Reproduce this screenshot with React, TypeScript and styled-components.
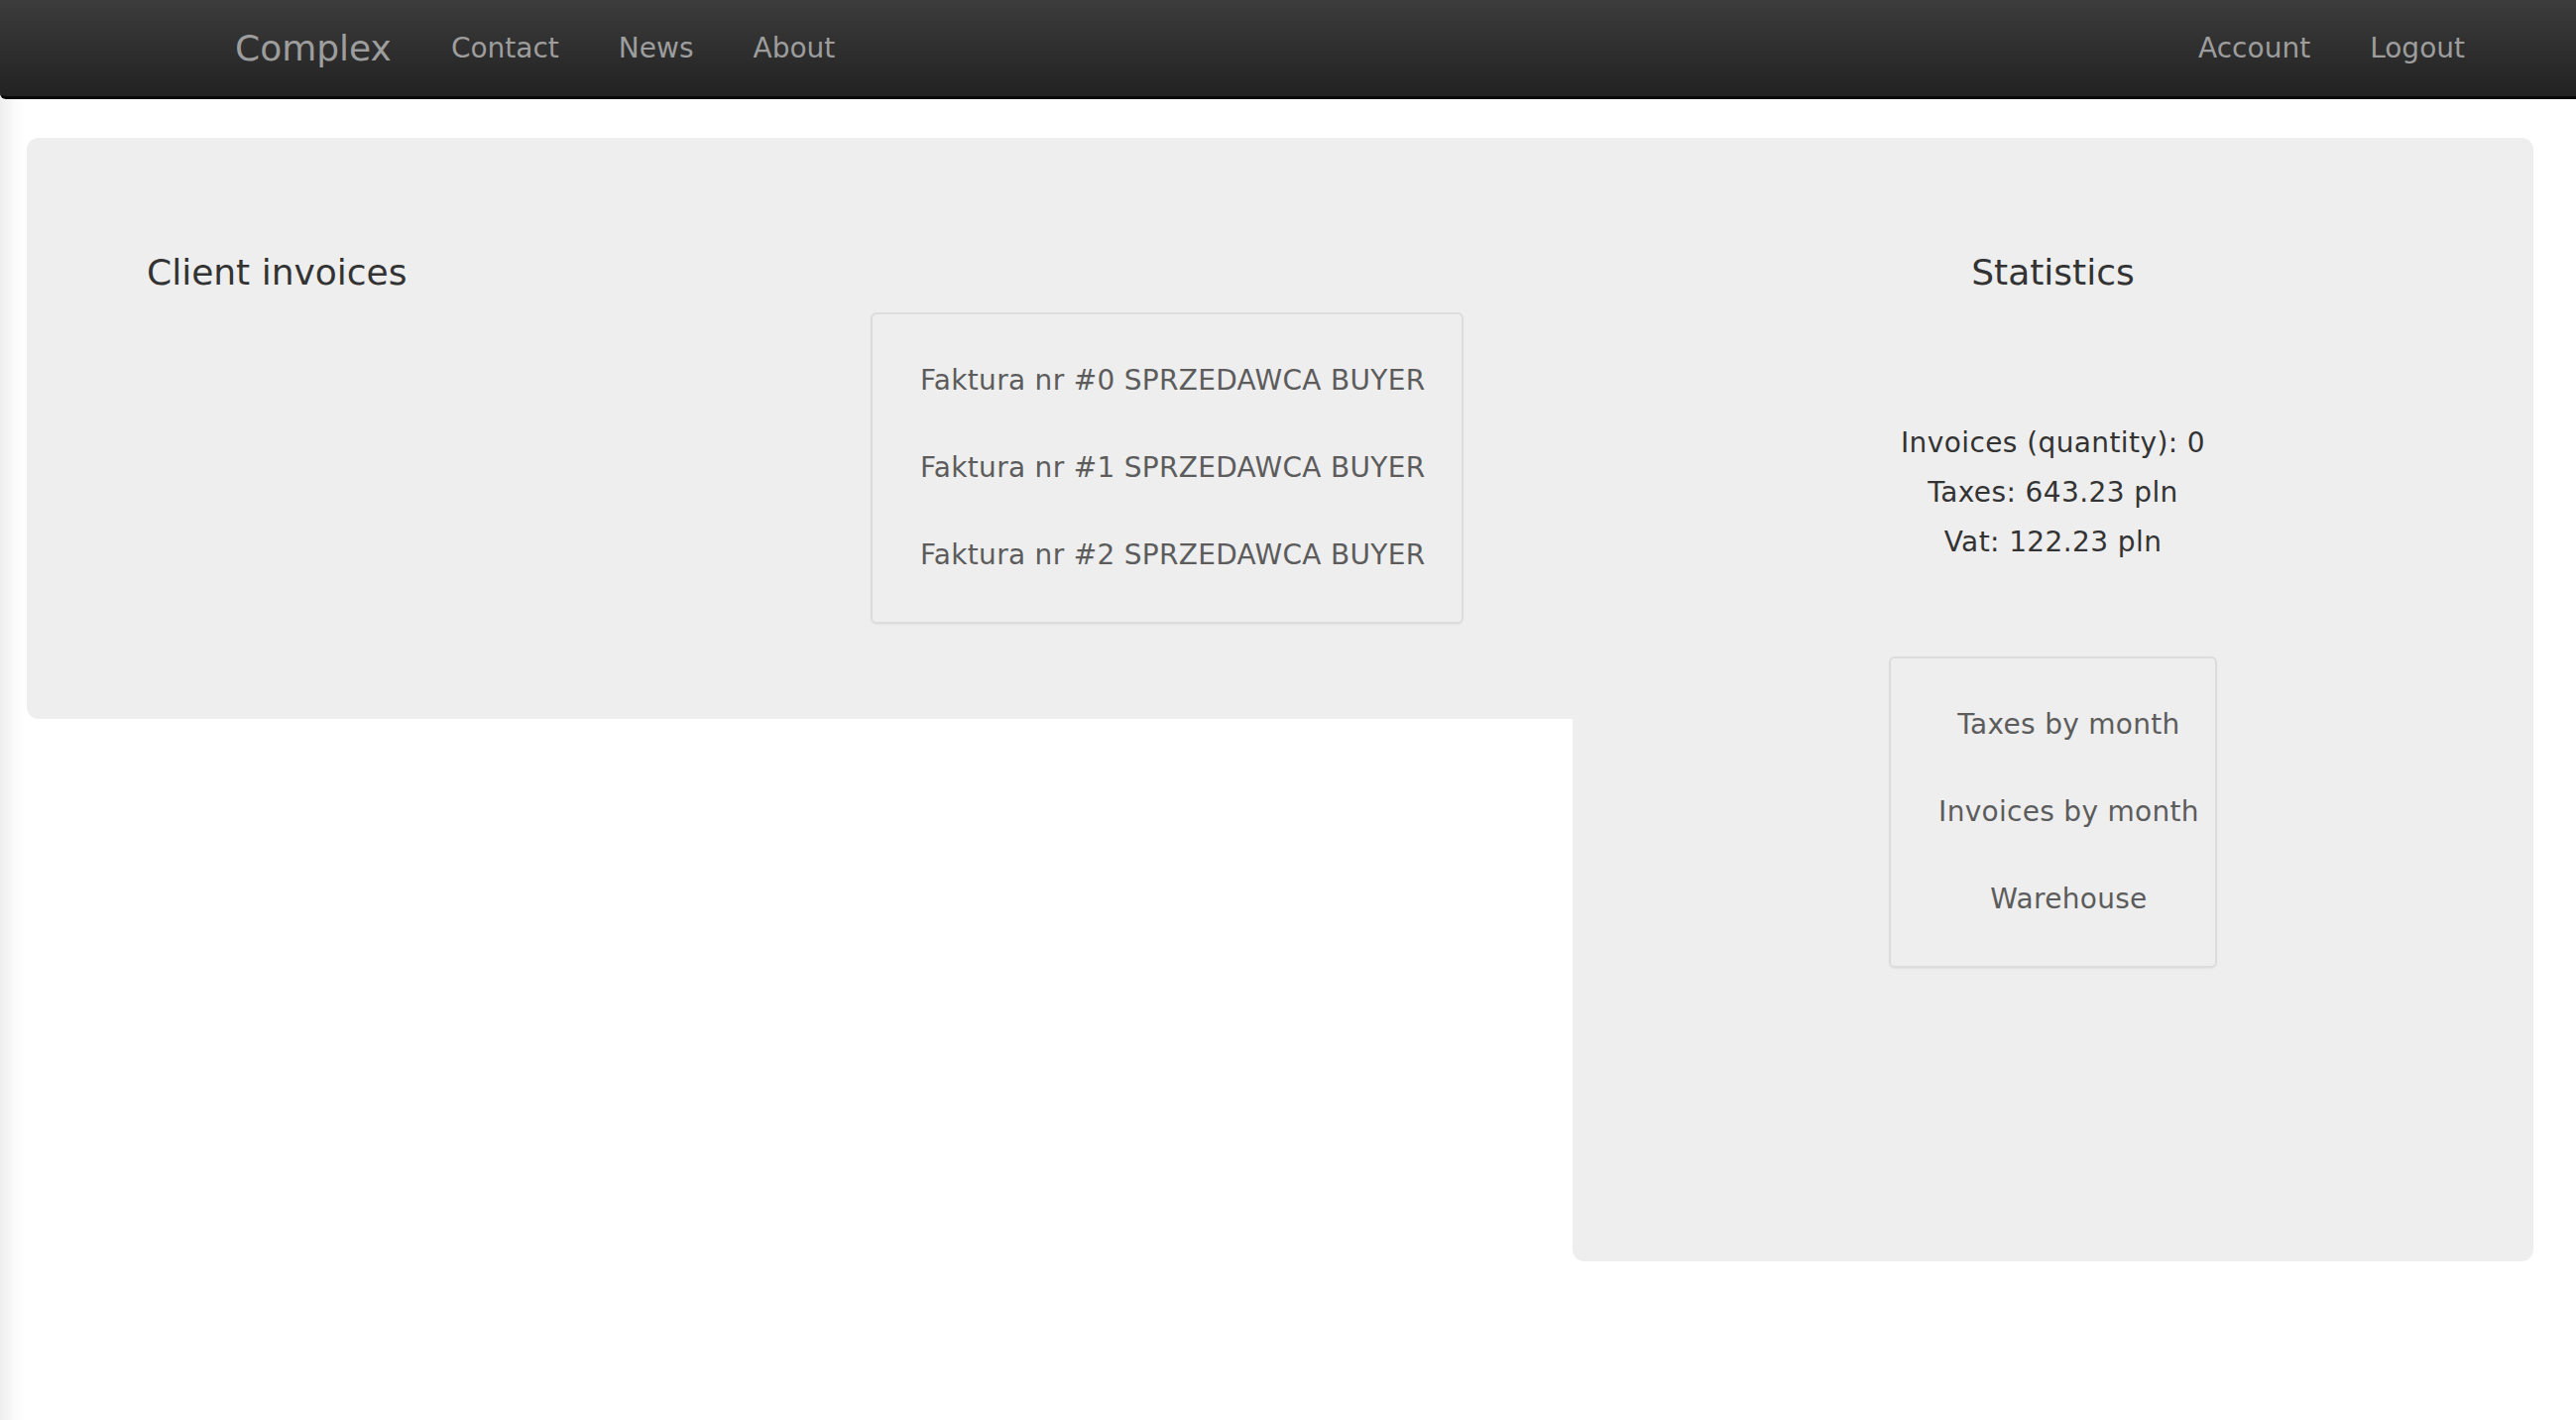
import styled, { createGlobalStyle } from 'styled-components';

const GlobalStyle = createGlobalStyle`
    html, body {
        margin: 0;
        padding: 0;
    }
    body {
        min-height: 100vh;
        background: linear-gradient(to right, #eeeeee 0, #fafafa 14px, #ffffff 26px);
        font-family: "DejaVu Sans", Verdana, sans-serif;
        color: #333;
    }
`;

const Navbar = styled.nav`
    height: 97px;
    background: linear-gradient(to bottom, #3c3c3c 0, #222 100%);
    border-bottom: 3px solid #080808;
    border-bottom-left-radius: 6px;
`;

const NavInner = styled.div`
    display: flex;
    align-items: center;
    height: 100%;
    padding: 0 82px 0 207px;
`;

const Brand = styled.a`
    font-size: 36px;
    color: #9d9d9d;
    padding: 0 30px;
    text-decoration: none;
`;

const NavList = styled.ul<{ $right?: boolean }>`
    display: flex;
    list-style: none;
    margin: 0 0 0 ${(p) => (p.$right ? 'auto' : '0')};
    padding: 0;
`;

const NavLink = styled.a`
    display: block;
    font-size: 28px;
    color: #9d9d9d;
    padding: 0 30px;
    text-decoration: none;
`;

const Main = styled.main`
    display: flex;
    align-items: flex-start;
    padding: 39px 43px 0 27px;
`;

const InvoicesPanel = styled.section`
    flex: 1;
    height: 586px;
    box-sizing: border-box;
    padding: 116px 0 0 121px;
    background: #eee;
    border-radius: 12px 0 0 12px;
`;

const StatsPanel = styled.section`
    width: 969px;
    height: 1133px;
    box-sizing: border-box;
    padding-top: 116px;
    display: flex;
    flex-direction: column;
    align-items: center;
    background: #eee;
    border-radius: 0 12px 12px 12px;
`;

const Heading = styled.h3`
    margin: 0;
    font-size: 36px;
    line-height: 40px;
    font-weight: normal;
    color: #333;
`;

const Well = styled.ul<{ $center?: boolean; $padRight: number }>`
    list-style: none;
    width: fit-content;
    margin: 20px 0 0 730px;
    padding: 23px ${(p) => p.$padRight}px 23px 48px;
    border: 2px solid #dcdcdc;
    border-radius: 6px;
    box-shadow: 0 1px 2px rgba(0, 0, 0, 0.06);
    text-align: ${(p) => (p.$center ? 'center' : 'left')};
`;

const StatsWell = styled(Well)`
    margin: 90px 0 0;
`;

const WellItem = styled.li`
    height: 88px;
    line-height: 88px;
    font-size: 28px;
    letter-spacing: 0.3px;
    color: #5c5c5c;
    white-space: nowrap;
`;

const StatsList = styled.div`
    margin-top: 127px;
    text-align: center;
`;

const StatLine = styled.p`
    margin: 0;
    font-size: 28px;
    line-height: 50px;
    letter-spacing: 0.4px;
    color: #333;
`;

const invoices = [0, 1, 2].map((n) => `Faktura nr #${n} SPRZEDAWCA BUYER`);
const reports = ['Taxes by month', 'Invoices by month', 'Warehouse'];

export default function App() {
    return (
        <>
            <GlobalStyle />
            <Navbar>
                <NavInner>
                    <Brand href="#">Complex</Brand>
                    <NavList>
                        <li><NavLink href="#">Contact</NavLink></li>
                        <li><NavLink href="#">News</NavLink></li>
                        <li><NavLink href="#">About</NavLink></li>
                    </NavList>
                    <NavList $right>
                        <li><NavLink href="#">Account</NavLink></li>
                        <li><NavLink href="#">Logout</NavLink></li>
                    </NavList>
                </NavInner>
            </Navbar>
            <Main>
                <InvoicesPanel>
                    <Heading>Client invoices</Heading>
                    <Well $padRight={37}>
                        {invoices.map((text) => (
                            <WellItem key={text}>{text}</WellItem>
                        ))}
                    </Well>
                </InvoicesPanel>
                <StatsPanel>
                    <Heading>Statistics</Heading>
                    <StatsList>
                        <StatLine>Invoices (quantity): 0</StatLine>
                        <StatLine>Taxes: 643.23 pln</StatLine>
                        <StatLine>Vat: 122.23 pln</StatLine>
                    </StatsList>
                    <StatsWell $center $padRight={16}>
                        {reports.map((text) => (
                            <WellItem key={text}>{text}</WellItem>
                        ))}
                    </StatsWell>
                </StatsPanel>
            </Main>
        </>
    );
}
